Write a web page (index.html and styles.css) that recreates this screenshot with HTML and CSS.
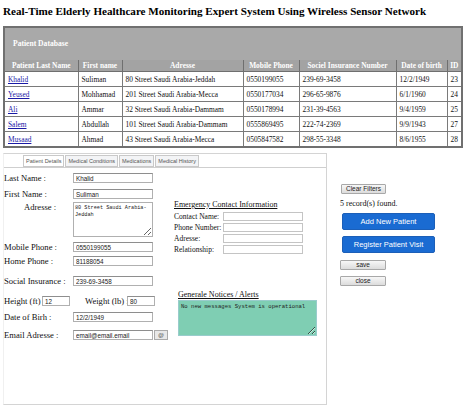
FILE: index.html
```html
<!DOCTYPE html>
<html>
<head>
<meta charset="utf-8">
<title>Patient Database</title>
<link rel="stylesheet" href="styles.css">
</head>
<body>
<h1 class="title">Real-Time Elderly Healthcare Monitoring Expert System Using Wireless Sensor Network</h1>

<div class="db">
  <div class="db-caption">Patient Database</div>
  <table class="db-table">
    <colgroup>
      <col class="c1"><col class="c2"><col class="c3"><col class="c4"><col class="c5"><col class="c6"><col class="c7">
    </colgroup>
    <thead>
      <tr><th>Patient Last Name</th><th>First name</th><th>Adresse</th><th>Mobile Phone</th><th>Sociel Insurance Number</th><th>Date of birth</th><th>ID</th></tr>
    </thead>
    <tbody>
      <tr><td><a href="#">Khalid</a></td><td>Suliman</td><td>80 Street Saudi Arabia-Jeddah</td><td>0550199055</td><td>239-69-3458</td><td>12/2/1949</td><td>23</td></tr>
      <tr><td><a href="#">Yeused</a></td><td>Mohhamad</td><td>201 Street Saudi Arabia-Mecca</td><td>0550177034</td><td>296-65-9876</td><td>6/1/1960</td><td>24</td></tr>
      <tr><td><a href="#">Ali</a></td><td>Ammar</td><td>32 Street Saudi Arabia-Dammam</td><td>0550178994</td><td>231-39-4563</td><td>9/4/1959</td><td>25</td></tr>
      <tr><td><a href="#">Salem</a></td><td>Abdullah</td><td>101 Street Saudi Arabia-Dammam</td><td>0555869495</td><td>222-74-2369</td><td>9/9/1943</td><td>27</td></tr>
      <tr><td><a href="#">Musaad</a></td><td>Ahmad</td><td>43 Street Saudi Arabia-Mecca</td><td>0505847582</td><td>298-55-3348</td><td>8/6/1955</td><td>28</td></tr>
    </tbody>
  </table>
</div>

<div class="workspace">
  <div class="panel">
    <div class="tabs">
      <span class="tab active">Patient Details</span>
      <span class="tab">Medical Conditions</span>
      <span class="tab">Medications</span>
      <span class="tab">Medical History</span>
    </div>
    <div class="form">
      <div class="col-left">
        <div class="row r-last"><label class="lbl">Last Name :</label><input class="field" value="Khalid"></div>
        <div class="row r-first"><label class="lbl">First Name :</label><input class="field" value="Suliman"></div>
        <div class="row r-addr"><label class="lbl lbl-indent">Adresse :</label><textarea class="area">80 Street Saudi Arabia-Jeddah</textarea></div>
        <div class="row r-mobile"><label class="lbl">Mobile Phone :</label><input class="field" value="0550199055"></div>
        <div class="row r-home"><label class="lbl">Home Phone :</label><input class="field" value="81188054"></div>
        <div class="row r-social"><label class="lbl">Social Insurance :</label><input class="field" value="239-69-3458"></div>
        <div class="row r-hw">
          <label class="lbl-short">Height (ft) :</label><input class="field small" value="12">
          <label class="lbl-weight">Weight (lb) :</label><input class="field small" value="80">
        </div>
        <div class="row r-dob"><label class="lbl">Date of Birh :</label><input class="field" value="12/2/1949"></div>
        <div class="row r-email"><label class="lbl">Email Adresse :</label><input class="field" value="email@email.email"><button class="at">@</button></div>
      </div>
      <div class="col-mid">
        <div class="emergency">
          <div class="section-title">Emergency Contact Information</div>
          <div class="erow"><label class="elbl">Contact Name:</label><input class="efield"></div>
          <div class="erow"><label class="elbl">Phone Number:</label><input class="efield"></div>
          <div class="erow"><label class="elbl">Adresse:</label><input class="efield"></div>
          <div class="erow"><label class="elbl">Relationship:</label><input class="efield"></div>
        </div>
        <div class="notices">
          <div class="section-title">Generale Notices / Alerts</div>
          <textarea class="alerts">No new messages System is operational</textarea>
        </div>
      </div>
    </div>
  </div>

  <div class="side">
    <button class="gbtn clear">Clear Filters</button>
    <div class="count">5 record(s) found.</div>
    <button class="bbtn">Add New Patient</button>
    <button class="bbtn">Register Patient Visit</button>
    <button class="gbtn wide">save</button>
    <button class="gbtn wide">close</button>
  </div>
</div>
</body>
</html>
```

FILE: styles.css
```css
body {
  margin: 0;
  padding: 0 3px;
  background: #ffffff;
  font-family: "Liberation Serif", "Times New Roman", serif;
  color: #111;
}

.title {
  margin: 0;
  padding-top: 4px;
  font-size: 11.1px;
  line-height: 14px;
  font-weight: bold;
  color: #000;
}

/* patient database table */
.db {
  margin-top: 8px;
  width: 456px;
  border: 2px solid #707070;
  background: #a9a9a9;
}

.db-caption {
  height: 32px;
  line-height: 32px;
  padding-left: 8px;
  font-size: 7.6px;
  font-weight: bold;
  color: #fff;
  background: #a9a9a9;
}

.db-table {
  width: 100%;
  border-collapse: collapse;
  table-layout: fixed;
  font-size: 7.4px;
}

.c1 { width: 73px; }
.c2 { width: 44px; }
.c3 { width: 121px; }
.c4 { width: 56px; }
.c5 { width: 97px; }
.c6 { width: 51px; }
.c7 { width: 14px; }

.db-table th {
  height: 11px;
  padding: 0;
  background: #a3a3a3;
  color: #fff;
  font-weight: bold;
  text-align: center;
  border: 1px solid #6f6f6f;
  border-top: none;
  white-space: nowrap;
  overflow: hidden;
}

.db-table td {
  height: 14px;
  padding: 0 0 0 3px;
  background: #fff;
  border: 1px solid #7a7a7a;
  white-space: nowrap;
  overflow: hidden;
}

.db-table tr > :first-child { border-left: none; }
.db-table tr > :last-child { border-right: none; }
.db-table tbody tr:last-child td { border-bottom: none; }

.db-table a { color: #1a1aa6; }

/* lower workspace */
.workspace {
  display: flex;
  margin-top: 5px;
}

.panel {
  width: 322px;
  height: 250px;
  border: 1px solid #d4d4d4;
  border-left-color: #f0f0f0;
}

.tabs {
  display: flex;
  gap: 1px;
  padding: 1px 0 0 19px;
  height: 12px;
  border-bottom: 1px solid #cfcfcf;
}

.tab {
  height: 10px;
  padding: 0 2px;
  border: 1px solid #c9c9c9;
  background: #f3f4f6;
  font-family: "Liberation Sans", Arial, sans-serif;
  font-size: 5.5px;
  line-height: 10px;
  color: #555;
}

.tab.active { background: #fff; }

.form {
  display: flex;
}

.col-left {
  width: 166px;
}

.row {
  display: flex;
  align-items: flex-start;
}

.lbl {
  width: 69px;
  flex-shrink: 0;
  font-size: 8.6px;
  line-height: 10px;
  white-space: nowrap;
}

.lbl-indent { padding-left: 20px; width: 49px; }

.field {
  box-sizing: border-box;
  width: 80px;
  height: 10px;
  margin: 0;
  padding: 0 2px;
  border: 1px solid #b0b0b0;
  border-top-color: #8e8e8e;
  font-family: "Liberation Sans", Arial, sans-serif;
  font-size: 6.3px;
  color: #222;
}

.field.small { width: 28px; }

.area {
  box-sizing: border-box;
  width: 80px;
  height: 35px;
  margin: 0;
  padding: 2px 1px;
  border: 1px solid #b0b0b0;
  font-family: "Liberation Mono", monospace;
  font-size: 5.2px;
  line-height: 7px;
  resize: vertical;
  overflow: hidden;
  color: #222;
}

.r-last { margin-top: 5px; }
.r-first { margin-top: 6px; }
.r-addr { margin-top: 3px; }
.r-mobile { margin-top: 5px; }
.r-home { margin-top: 4px; }
.r-social { margin-top: 10px; }
.r-hw { margin-top: 10px; }
.r-dob { margin-top: 6px; }
.r-email { margin-top: 8px; }

.lbl-short {
  width: 38px;
  font-size: 8.6px;
  line-height: 10px;
  white-space: nowrap;
}

.lbl-weight {
  width: 42px;
  padding-left: 15px;
  font-size: 8.6px;
  line-height: 10px;
  white-space: nowrap;
}

.at {
  box-sizing: border-box;
  width: 14px;
  height: 10px;
  margin: 0 0 0 1px;
  padding: 0;
  border: 1px solid #aaa;
  background: #e8e8e8;
  font-family: "Liberation Sans", Arial, sans-serif;
  font-size: 6px;
  line-height: 8px;
  color: #555;
}

.col-mid {
  padding-left: 4px;
}

.section-title {
  font-size: 8px;
  line-height: 10px;
  text-decoration: underline;
  white-space: nowrap;
}

.emergency { margin-top: 32px; }

.erow {
  display: flex;
  margin-top: 2px;
}

.elbl {
  width: 49px;
  font-size: 7.5px;
  line-height: 9px;
  white-space: nowrap;
}

.efield {
  box-sizing: border-box;
  width: 80px;
  height: 9px;
  margin: 0;
  border: 1px solid #c4c4c4;
}

.notices {
  margin-top: 36px;
  padding-left: 4px;
}

.alerts {
  display: block;
  box-sizing: border-box;
  width: 139px;
  height: 36px;
  margin: 0;
  padding: 2px;
  border: 1px solid #9cc;
  background: #7fceb3;
  font-family: "Liberation Mono", monospace;
  font-size: 5.6px;
  line-height: 7px;
  color: #222;
  resize: vertical;
  overflow: hidden;
}

/* right-hand actions */
.side {
  display: flex;
  flex-direction: column;
  align-items: flex-start;
  padding: 31px 0 0 13px;
}

.gbtn {
  box-sizing: border-box;
  height: 10px;
  padding: 0;
  border: 1px solid #a8a8a8;
  border-radius: 1px;
  background: linear-gradient(#f7f7f7, #dcdcdc);
  font-family: "Liberation Sans", Arial, sans-serif;
  font-size: 6.5px;
  line-height: 8px;
  color: #222;
}

.clear { width: 45px; margin-left: 1px; }

.count {
  margin-top: 5px;
  font-size: 8px;
  line-height: 10px;
}

.bbtn {
  box-sizing: border-box;
  width: 93px;
  height: 17px;
  margin: 4px 0 0 2px;
  padding: 0;
  border: 1px solid #1c5fb8;
  border-radius: 2px;
  background: #1a6bd2;
  font-family: "Liberation Sans", Arial, sans-serif;
  font-size: 7.5px;
  color: #fff;
}

.bbtn + .bbtn { margin-top: 6px; }

.wide { width: 46px; margin-top: 6px; }
.bbtn + .wide { margin-top: 7px; }
```
